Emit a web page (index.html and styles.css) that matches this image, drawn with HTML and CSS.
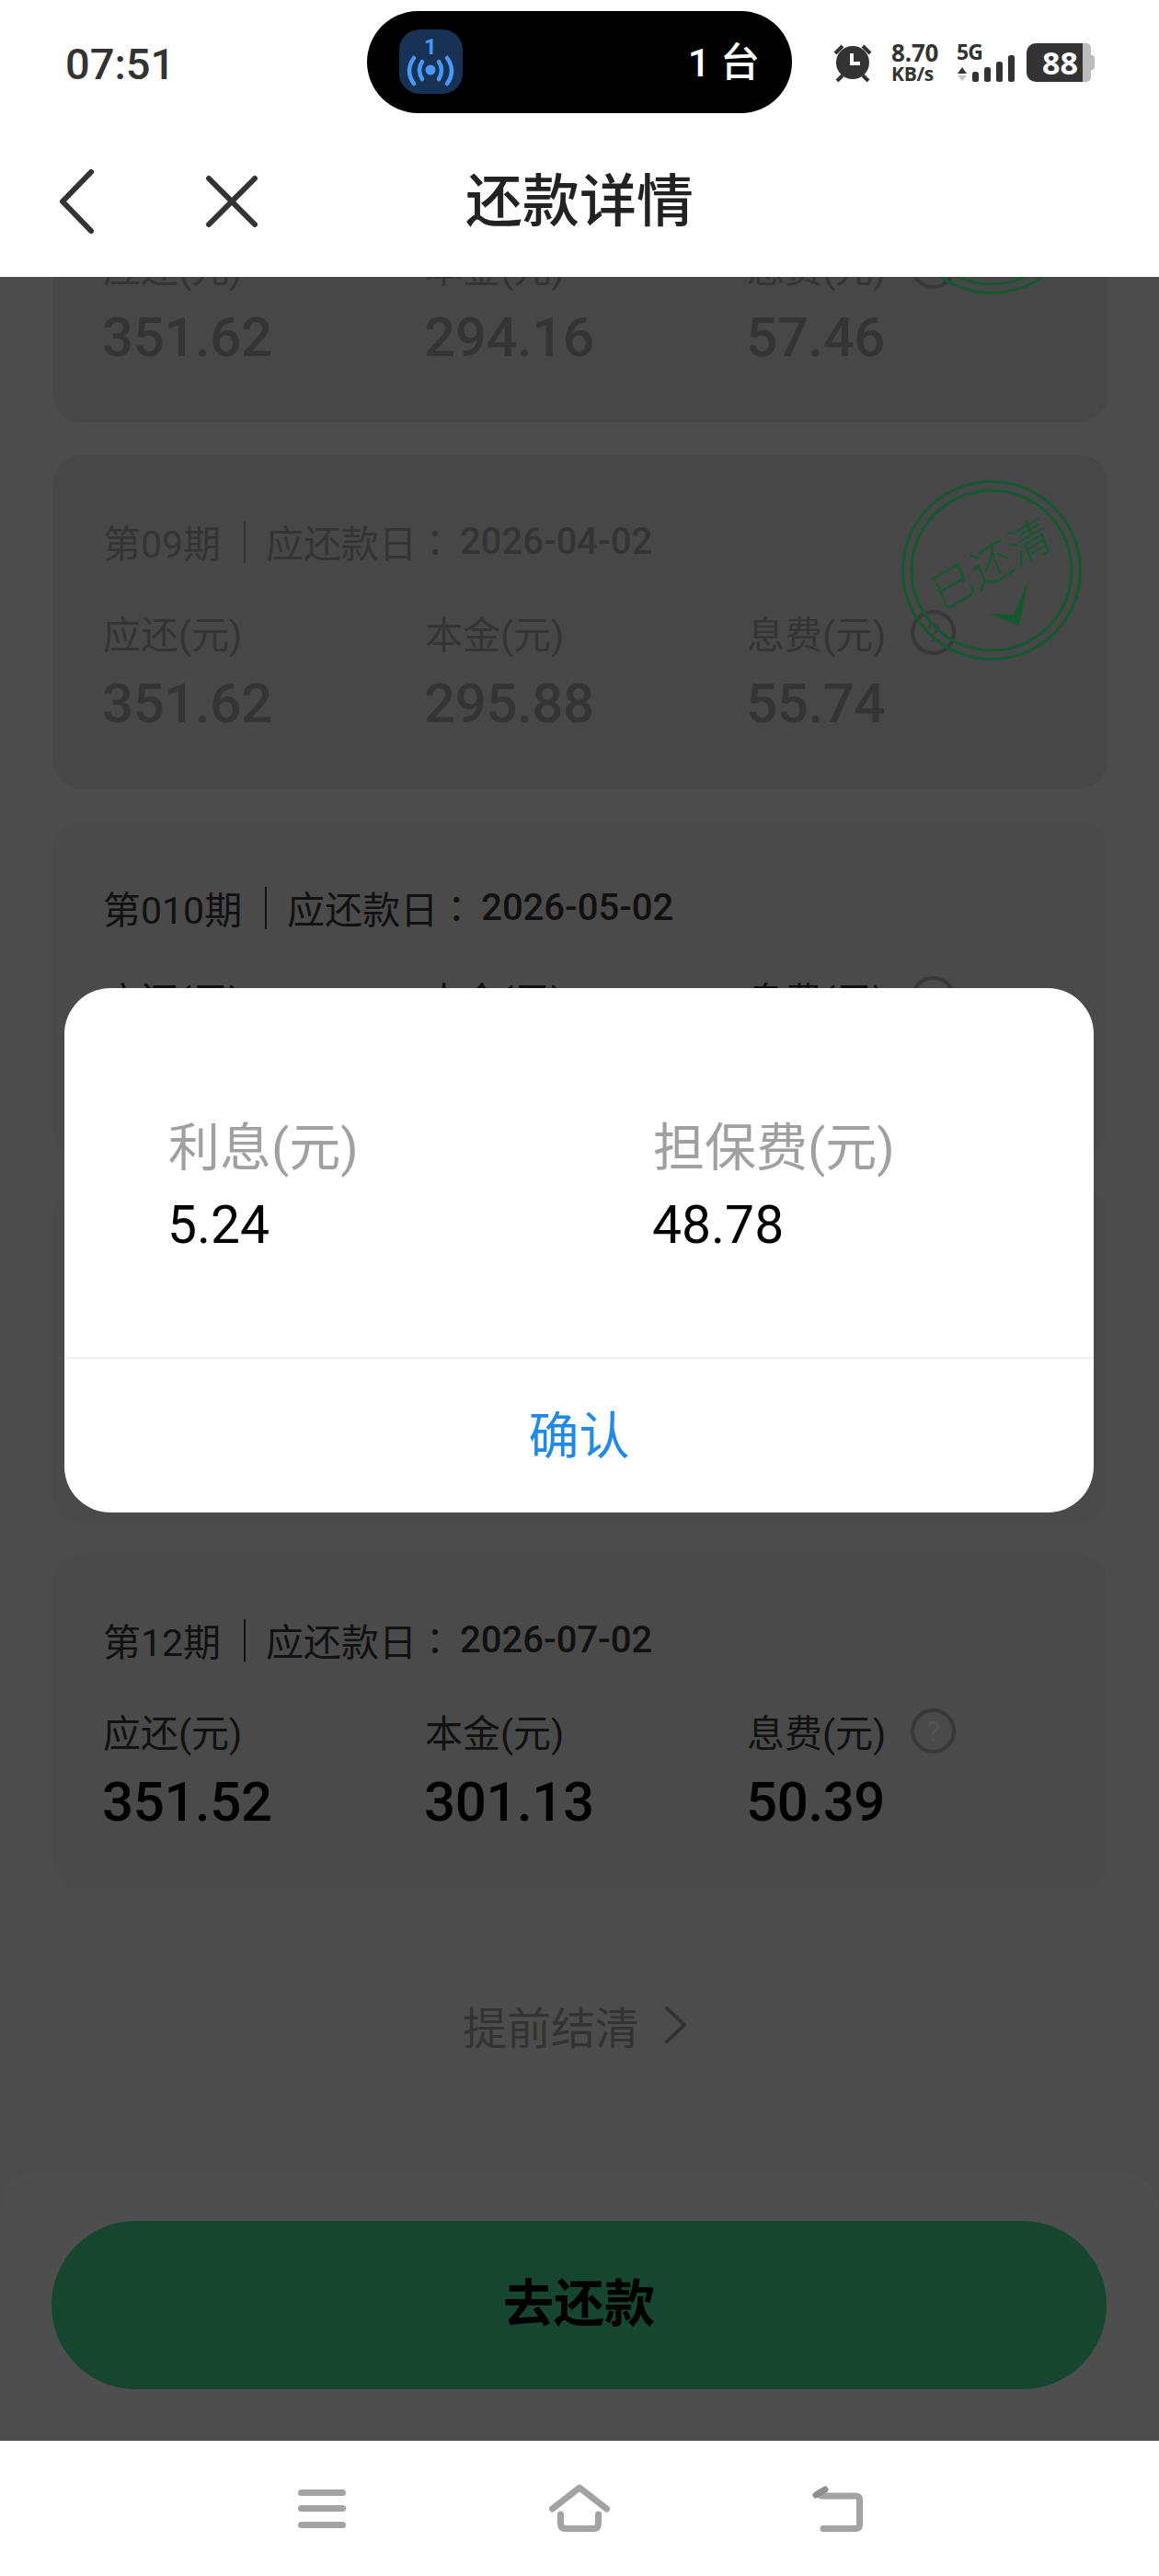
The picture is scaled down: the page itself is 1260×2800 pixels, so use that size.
FILE: index.html
```html
<!DOCTYPE html>
<html lang="zh-CN">
<head>
<meta charset="utf-8">
<title>还款详情</title>
<link rel="stylesheet" href="styles.css">
</head>
<body>
<div class="page">
  <header class="top">
    <div class="status">
      <span class="time">07:51</span>
      <div class="island">
        <svg class="island-app" viewBox="0 0 69 70" width="69" height="70">
          <text class="island-num" x="34" y="27" text-anchor="middle">1</text>
          <circle cx="34" cy="44" r="5.5" fill="#4a98f5"/>
          <g fill="none" stroke="#4a98f5" stroke-width="4.5" stroke-linecap="round">
            <path d="M25 35Q19 44 25 54M43 35Q49 44 43 54"/>
            <path d="M16 31Q6 45 16 59M52 31Q62 45 52 59"/>
          </g>
        </svg>
        <span class="island-text">1 台</span>
      </div>
      <div class="sys">
        <svg viewBox="0 0 42 42" width="42" height="42" class="alarm">
          <circle cx="21" cy="21" r="18" fill="#333"/>
          <path d="M20 11V22H29" fill="none" stroke="#fff" stroke-width="4"/>
          <path d="M2 11L10 3M40 11L32 3M4 41L10 35M38 41L32 35" stroke="#333" stroke-width="4" fill="none"/>
        </svg>
        <div class="speed"><span class="speed-a">8.70</span><span class="speed-b">KB/s</span></div>
        <div class="net">
          <span class="net-5g">5G</span>
          <svg viewBox="0 0 63 42" width="63" height="42">
            <path d="M1 33L6 26L11 33Z" fill="#333"/>
            <path d="M1 35L6 41L11 35Z" fill="#c4c4c4"/>
            <rect x="17" y="31" width="7" height="11" rx="2.5" fill="#333"/>
            <rect x="30" y="26" width="7" height="16" rx="2.5" fill="#333"/>
            <rect x="43" y="20" width="7" height="22" rx="2.5" fill="#333"/>
            <rect x="56" y="13" width="7" height="29" rx="2.5" fill="#333"/>
          </svg>
        </div>
        <div class="battery">
          <span class="battery-level">88</span>
          <span class="battery-rest"></span>
        </div>
      </div>
    </div>
    <div class="titlebar">
      <div class="title-icons">
        <svg viewBox="0 0 44 72" width="44" height="72" class="ico-back"><path d="M37 4L6 36L37 68" fill="none" stroke="#333" stroke-width="6" stroke-linecap="round" stroke-linejoin="round"/></svg>
        <svg viewBox="0 0 60 60" width="60" height="60" class="ico-close"><path d="M5 5L55 55M55 5L5 55" fill="none" stroke="#333" stroke-width="6" stroke-linecap="round"/></svg>
      </div>
      <h1 class="title">还款详情</h1>
      <div></div>
    </div>
  </header>

  <main class="content">
    <div class="list">
      <section class="card paid">
        <div class="card-title"></div>
        <div class="cols">
          <div><div class="lab">应还(元)</div><div class="num">351.62</div></div>
          <div><div class="lab">本金(元)</div><div class="num">294.16</div></div>
          <div><div class="lab">息费(元)<span class="help">?</span></div><div class="num">57.46</div></div>
        </div>
        <div class="stamp">
          <svg viewBox="0 0 196 196" width="196" height="196">
            <circle cx="98" cy="98" r="96.5" fill="none" stroke="#14582f" stroke-width="3"/>
            <circle cx="98" cy="98" r="87" fill="none" stroke="#14582f" stroke-width="3"/>
          </svg>
        </div>
      </section>

      <section class="card paid">
        <div class="card-title"><span>第09期</span><i class="sep"></i><span>应还款日</span><span class="colon">：</span><span class="date">2026-04-02</span></div>
        <div class="cols">
          <div><div class="lab">应还(元)</div><div class="num">351.62</div></div>
          <div><div class="lab">本金(元)</div><div class="num">295.88</div></div>
          <div><div class="lab">息费(元)<span class="help">?</span></div><div class="num">55.74</div></div>
        </div>
        <div class="stamp">
          <svg viewBox="0 0 196 196" width="196" height="196">
            <circle cx="98" cy="98" r="96.5" fill="none" stroke="#14582f" stroke-width="3"/>
            <circle cx="98" cy="98" r="87" fill="none" stroke="#14582f" stroke-width="3"/>
            <path d="M96 145L128 158L138 109L122 146Z" fill="#14582f"/>
          </svg>
          <span class="stamp-text">已还清</span>
        </div>
      </section>

      <section class="card">
        <div class="card-title"><span>第010期</span><i class="sep"></i><span>应还款日</span><span class="colon">：</span><span class="date">2026-05-02</span></div>
        <div class="cols">
          <div><div class="lab">应还(元)</div></div>
          <div><div class="lab">本金(元)</div></div>
          <div><div class="lab">息费(元)<span class="help">?</span></div></div>
        </div>
      </section>

      <section class="card"></section>

      <section class="card">
        <div class="card-title"><span>第12期</span><i class="sep"></i><span>应还款日</span><span class="colon">：</span><span class="date">2026-07-02</span></div>
        <div class="cols">
          <div><div class="lab">应还(元)</div><div class="num">351.52</div></div>
          <div><div class="lab">本金(元)</div><div class="num">301.13</div></div>
          <div><div class="lab">息费(元)<span class="help">?</span></div><div class="num">50.39</div></div>
        </div>
      </section>
    </div>

    <div class="settle">
      <span>提前结清</span>
      <svg viewBox="0 0 26 40" width="26" height="40"><path d="M3 2L22 20L3 38" fill="none" stroke="#333" stroke-width="4" stroke-linecap="round" stroke-linejoin="round"/></svg>
    </div>
  </main>

  <div class="pay-panel">
    <div class="pay-btn">去还款</div>
  </div>

  <nav class="sysnav">
    <svg viewBox="0 0 52 56" width="52" height="56" class="nav-menu">
      <rect y="6" width="52" height="7" rx="3.5" fill="#a3a3a3"/>
      <rect y="23" width="52" height="7" rx="3.5" fill="#a3a3a3"/>
      <rect y="41" width="52" height="7" rx="3.5" fill="#a3a3a3"/>
    </svg>
    <svg viewBox="0 0 66 56" width="66" height="56" class="nav-home">
      <path d="M3.5 27L33 4L62.5 27" fill="none" stroke="#a3a3a3" stroke-width="7" stroke-linecap="round" stroke-linejoin="round"/>
      <path d="M12.5 33V43Q12.5 48.5 18 48.5H48Q53.5 48.5 53.5 43V33" fill="none" stroke="#a3a3a3" stroke-width="7" stroke-linecap="round"/>
    </svg>
    <svg viewBox="0 0 56 56" width="56" height="56" class="nav-back">
      <path d="M11 13H48Q52.5 13 52.5 17V44Q52.5 48.5 48 48.5H13" fill="none" stroke="#a3a3a3" stroke-width="7" stroke-linecap="round"/>
      <path d="M5 12L15 6" fill="none" stroke="#8f8f8f" stroke-width="7" stroke-linecap="round"/>
    </svg>
  </nav>

  <div class="modal">
    <div class="modal-body">
      <div><div class="modal-lab">利息(元)</div><div class="modal-val">5.24</div></div>
      <div><div class="modal-lab">担保费(元)</div><div class="modal-val">48.78</div></div>
    </div>
    <div class="modal-action">确认</div>
  </div>
</div>
</body>
</html>
```

FILE: styles.css
```css
* { box-sizing: border-box; }
html, body { margin: 0; padding: 0; background: #4c4c4c; }
body { font-family: Roboto, "Noto Sans CJK SC", "Liberation Sans", sans-serif; }

.page {
  position: relative;
  width: 1260px;
  height: 2800px;
  display: flex;
  flex-direction: column;
  overflow: hidden;
}

/* header */
.top { height: 301px; background: #fff; flex: none; position: relative; z-index: 2; }
.status { height: 135px; display: flex; align-items: flex-start; padding-top: 12px; }
.time {
  width: 399px;
  padding: 2px 0 0 71px;
  height: 111px;
  line-height: 111px;
  font-size: 47px;
  font-weight: 500;
  color: #333;
}
.island {
  width: 462px;
  height: 111px;
  border-radius: 56px;
  background: #000;
  display: flex;
  align-items: center;
  justify-content: space-between;
  padding: 0 35px;
  flex: none;
}
.island-app { background: #183256; border-radius: 22px; margin-top: -2px; }
.island-num { font: 700 24px Roboto, sans-serif; fill: #4a98f5; }
.island-text { color: #fff; font-size: 43px; font-weight: 500; line-height: 50px; }

.sys { display: flex; align-items: center; margin-left: 45px; height: 111px; }
.alarm { flex: none; }
.speed {
  margin-left: 21px;
  width: 51px;
  display: flex;
  flex-direction: column;
  color: #333;
  font-family: "Open Sans", sans-serif;
  font-weight: 700;
  white-space: nowrap;
}
.speed-a { font-size: 26px; line-height: 25px; letter-spacing: -0.2px; }
.speed-b { font-size: 21px; line-height: 21px; letter-spacing: -0.3px; }
.net { margin-left: 20px; width: 63px; height: 42px; position: relative; }
.net svg { display: block; }
.net-5g {
  position: absolute;
  left: 0;
  top: -3px;
  font: 700 23px/24px "Open Sans", sans-serif;
  letter-spacing: -1px;
  color: #333;
}
.battery { margin-left: 13px; display: flex; height: 42px; }
.battery-level {
  width: 61px;
  background: #333;
  color: #fff;
  border-radius: 10px 0 0 10px;
  font: 700 34px/42px "Open Sans", sans-serif;
  text-align: right;
  padding-right: 5px;
}
.battery-rest {
  position: relative;
  width: 9px;
  background: #bcbcbc;
  border-radius: 0 5px 5px 0;
}
.battery-rest::after {
  content: "";
  position: absolute;
  left: 9px;
  top: 13px;
  width: 4px;
  height: 16px;
  background: #bcbcbc;
  border-radius: 0 3px 3px 0;
}

.titlebar {
  height: 166px;
  display: grid;
  grid-template-columns: 1fr auto 1fr;
  align-items: center;
}
.title-icons { display: flex; align-items: center; padding-left: 62px; }
.ico-back { margin-top: 2px; }
.ico-close { margin-left: 116px; margin-top: 2px; }
.title {
  margin: 3px 0 0;
  font-size: 62px;
  font-weight: 500;
  color: #222;
  line-height: 80px;
}

/* list */
.content { flex: 1; min-height: 0; overflow: hidden; background: #4c4c4c; }
.list { margin-top: -204px; display: flex; flex-direction: column; gap: 34px; padding: 0 56px 0 58px; }
.card {
  position: relative;
  height: 364px;
  border-radius: 30px;
  background: #4a4a4a;
  padding: 62px 0 0 54px;
  color: #111;
}
.card.paid { height: 362px; margin-bottom: 2px; background: #474747; color: #343434; }

.card-title { display: flex; align-items: center; height: 60px; padding-top: 2px; font-size: 41px; white-space: nowrap; }
.sep { width: 2px; height: 46px; background: currentColor; margin: 2px 22px 0 25px; }
.colon { font-family: "Noto Sans CJK TC", sans-serif; font-size: 40px; }
.date { margin-left: 7px; font-size: 40px; font-weight: 500; }

.cols { display: grid; grid-template-columns: repeat(3, 350px); margin-top: 40px; }
.lab { display: flex; align-items: center; height: 60px; font-size: 41px; white-space: nowrap; }
.num { height: 80px; margin-top: 8px; margin-left: -1px; font-size: 60px; line-height: 80px; font-weight: 500; letter-spacing: -0.4px; color: #000; }
.paid .num { color: #343434; }
.help {
  width: 49px;
  height: 49px;
  margin-left: 27px;
  border: 4px solid #383838;
  border-radius: 50%;
  color: #555;
  font-size: 30px;
  line-height: 41px;
  text-align: center;
}
.paid .help { color: #3e3e3e; }

.stamp { position: absolute; left: 922px; top: 27px; width: 196px; height: 196px; }
.stamp svg { display: block; }
.stamp-text {
  position: absolute;
  left: 0;
  right: 0;
  top: 62px;
  text-align: center;
  font-size: 47px;
  line-height: 60px;
  letter-spacing: 1px;
  color: #14582f;
  font-weight: 300;
  transform: rotate(-30deg) skewX(-8deg);
}

.settle {
  margin-top: 118px;
  height: 60px;
  display: flex;
  align-items: center;
  justify-content: center;
  gap: 27px;
  padding-right: 9px;
  color: #333;
  font-size: 48px;
}

/* pay */
.pay-panel {
  flex: none;
  height: 294px;
  background: #4e4e4e;
  border-radius: 44px 44px 0 0;
  padding: 55px 57px 0 56px;
}
.pay-btn {
  height: 183px;
  border-radius: 92px;
  background: #164530;
  color: #000;
  font-size: 55px;
  font-weight: 700;
  line-height: 181px;
  text-align: center;
}

/* system nav */
.sysnav {
  flex: none;
  height: 147px;
  background: #fff;
  display: flex;
  align-items: flex-start;
  padding: 47px 0 0 324px;
}
.nav-home { margin-left: 221px; }
.nav-back { margin-left: 219px; }

/* modal */
.modal {
  position: absolute;
  left: 70px;
  top: 1074px;
  width: 1119px;
  height: 570px;
  background: #fff;
  border-radius: 50px;
  display: flex;
  flex-direction: column;
  z-index: 3;
}
.modal-body {
  height: 403px;
  display: grid;
  grid-template-columns: 527px 1fr;
  padding: 134px 0 0 113px;
  border-bottom: 2px solid #f2f2f2;
}
.modal-lab { font-size: 56px; line-height: 80px; color: #a0a0a0; white-space: nowrap; }
.modal-val { font-size: 57px; line-height: 70px; color: #000; margin-top: 9px; margin-left: -1px; }
.modal-action {
  flex: 1;
  display: flex;
  align-items: center;
  justify-content: center;
  padding-bottom: 10px;
  color: #2189e8;
  font-size: 55px;
}
```
